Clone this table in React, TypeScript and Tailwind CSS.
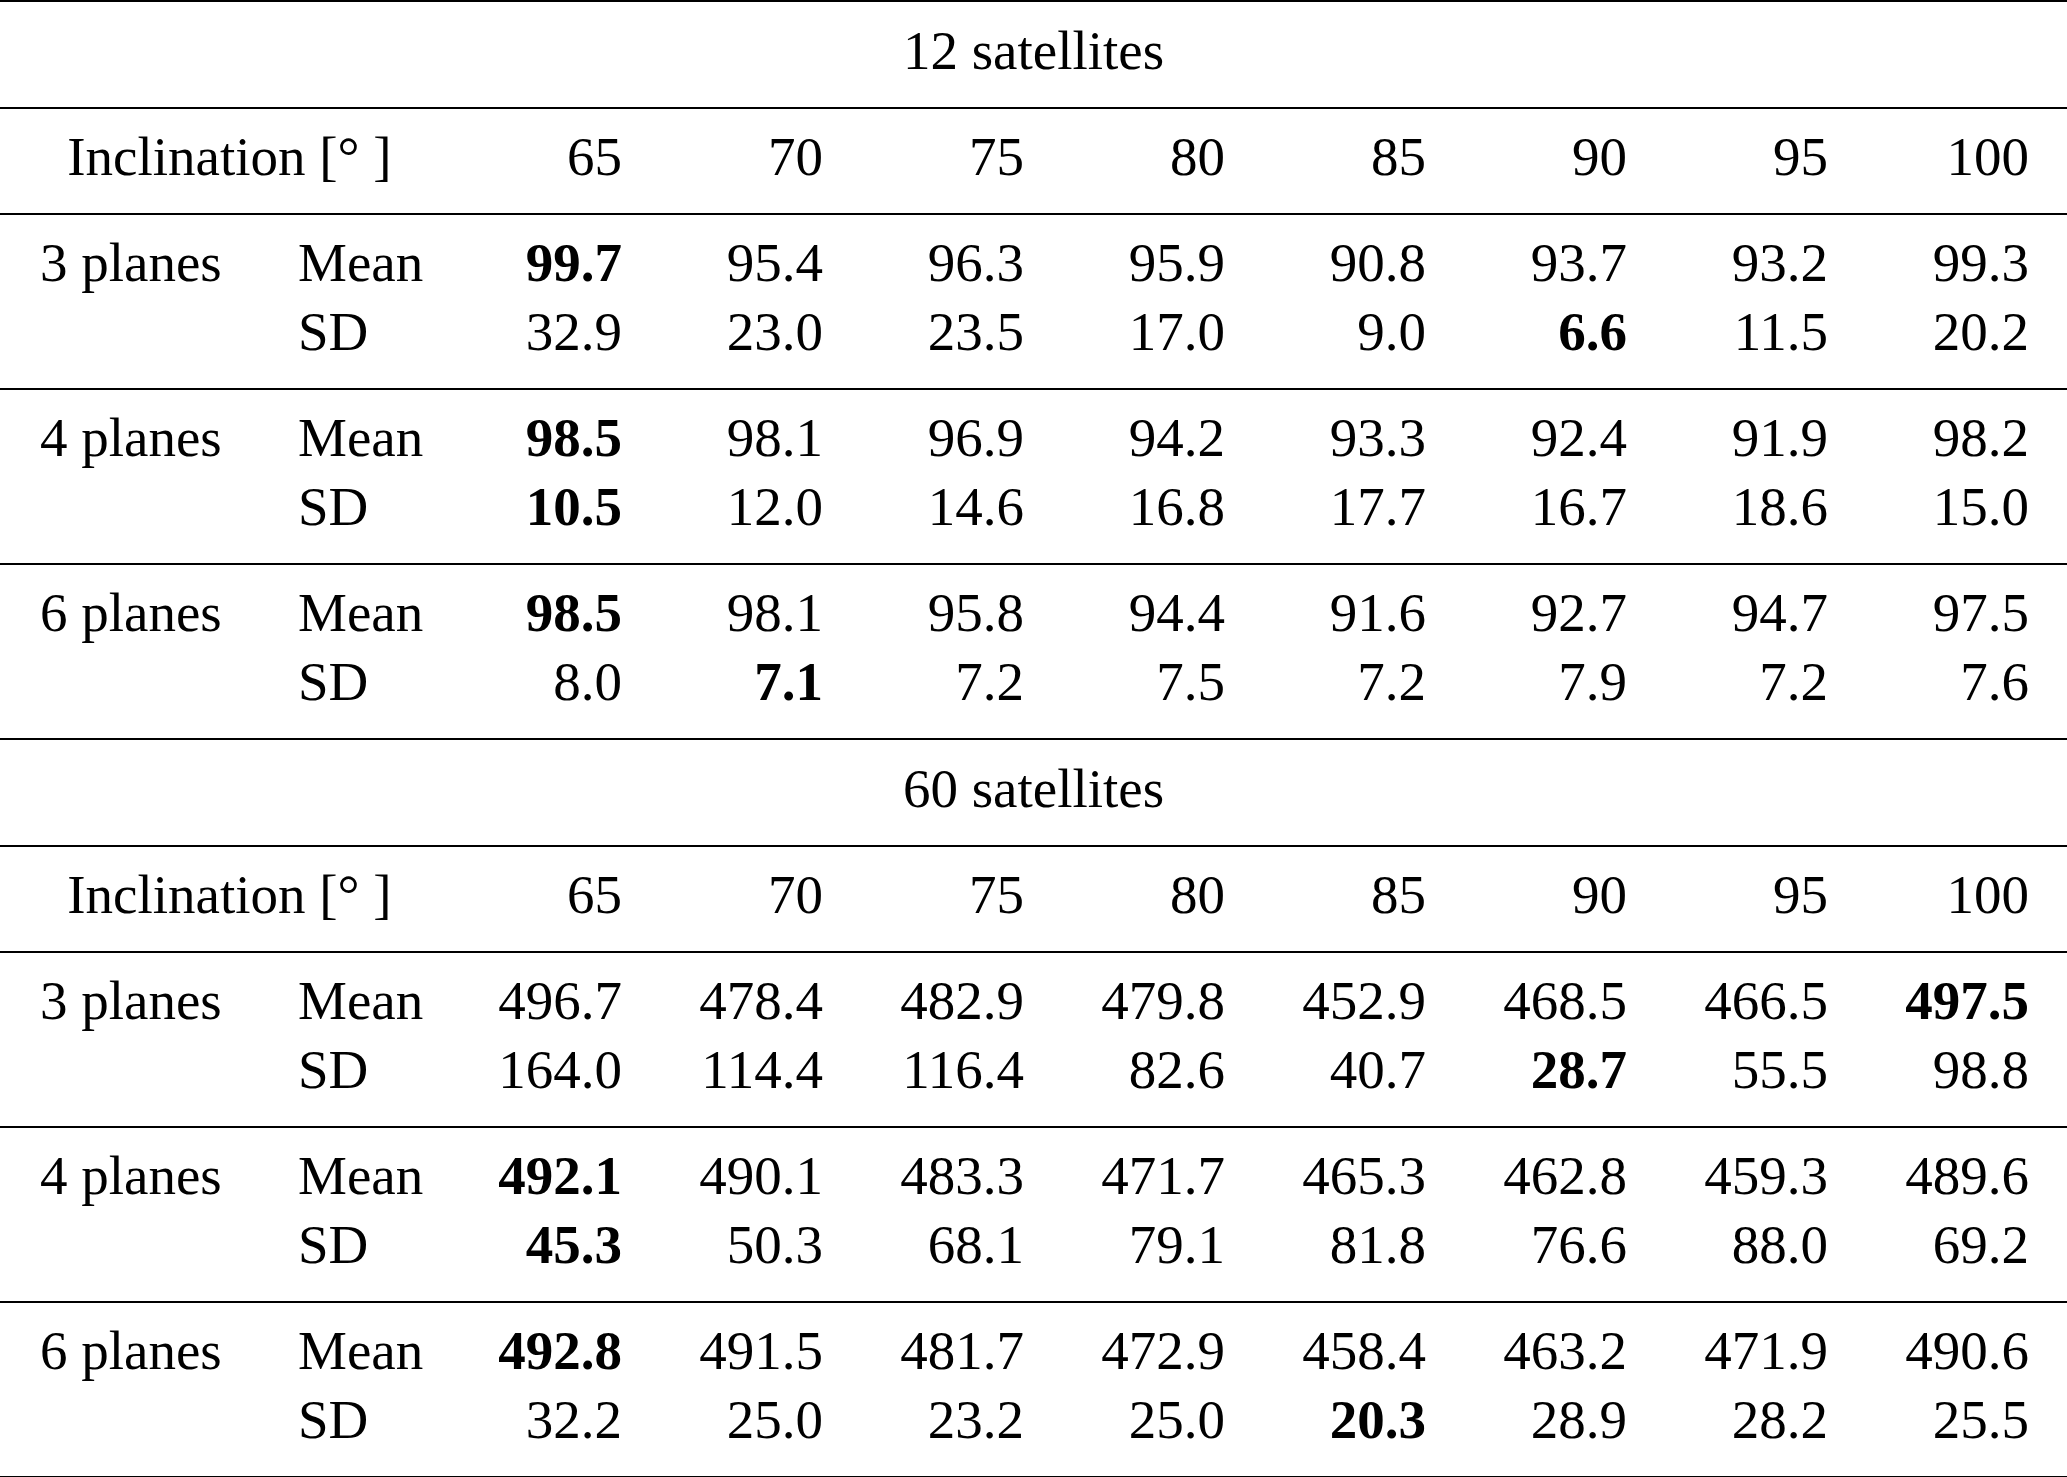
import React from "react";

type Cell = { v: string; b?: boolean };

const cols = ["65", "70", "75", "80", "85", "90", "95", "100"];

const parse = (s: string): Cell[] =>
  s.split(" ").map((t) => (t.startsWith("*") ? { v: t.slice(1), b: true } : { v: t }));

type Group = { label: string; mean: Cell[]; sd: Cell[] };

const sections: { title: string; groups: Group[] }[] = [
  {
    title: "12 satellites",
    groups: [
      {
        label: "3 planes",
        mean: parse("*99.7 95.4 96.3 95.9 90.8 93.7 93.2 99.3"),
        sd: parse("32.9 23.0 23.5 17.0 9.0 *6.6 11.5 20.2"),
      },
      {
        label: "4 planes",
        mean: parse("*98.5 98.1 96.9 94.2 93.3 92.4 91.9 98.2"),
        sd: parse("*10.5 12.0 14.6 16.8 17.7 16.7 18.6 15.0"),
      },
      {
        label: "6 planes",
        mean: parse("*98.5 98.1 95.8 94.4 91.6 92.7 94.7 97.5"),
        sd: parse("8.0 *7.1 7.2 7.5 7.2 7.9 7.2 7.6"),
      },
    ],
  },
  {
    title: "60 satellites",
    groups: [
      {
        label: "3 planes",
        mean: parse("496.7 478.4 482.9 479.8 452.9 468.5 466.5 *497.5"),
        sd: parse("164.0 114.4 116.4 82.6 40.7 *28.7 55.5 98.8"),
      },
      {
        label: "4 planes",
        mean: parse("*492.1 490.1 483.3 471.7 465.3 462.8 459.3 489.6"),
        sd: parse("*45.3 50.3 68.1 79.1 81.8 76.6 88.0 69.2"),
      },
      {
        label: "6 planes",
        mean: parse("*492.8 491.5 481.7 472.9 458.4 463.2 471.9 490.6"),
        sd: parse("32.2 25.0 23.2 25.0 *20.3 28.9 28.2 25.5"),
      },
    ],
  },
];

const gridCols = "grid grid-cols-[258px_201px_repeat(8,201px)]";

function Line() {
  return <div className="h-[2px] w-full bg-black" />;
}

function Num({ c }: { c: Cell }) {
  return <div className={`pr-[38px] text-right ${c.b ? "font-bold" : ""}`}>{c.v}</div>;
}

function GroupRow({ g }: { g: Group }) {
  return (
    <div className={`${gridCols} h-[173px] pt-[13px]`}>
      <div className="pl-[40px]">{g.label}</div>
      <div className="pl-[40px]">
        <div>Mean</div>
        <div>SD</div>
      </div>
      {g.mean.map((m, i) => (
        <div key={i}>
          <Num c={m} />
          <Num c={g.sd[i]} />
        </div>
      ))}
    </div>
  );
}

export default function App() {
  return (
    <div
      className="w-[2067px] bg-white text-black text-[55px] leading-[69px]"
      style={{ fontFamily: '"Liberation Serif", "Times New Roman", serif' }}
    >
      {sections.map((s, si) => (
        <div key={si} className="flex flex-col">
          {si === 0 && <Line />}
          <div className="h-[105px] pt-[14px] text-center">{s.title}</div>
          <Line />
          <div className={`${gridCols} h-[104px] pt-[13px]`}>
            <div className="col-span-2 text-center">Inclination [° ]</div>
            {cols.map((c) => (
              <div key={c} className="pr-[38px] text-right">
                {c}
              </div>
            ))}
          </div>
          <Line />
          {s.groups.map((g, gi) => (
            <React.Fragment key={gi}>
              <GroupRow g={g} />
              <Line />
            </React.Fragment>
          ))}
        </div>
      ))}
    </div>
  );
}
